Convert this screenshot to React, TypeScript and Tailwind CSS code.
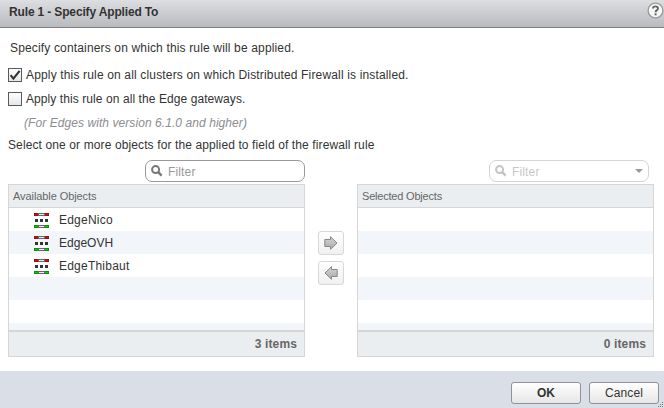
import React from "react";

function EdgeIcon() {
  return (
    <svg width="15" height="15" viewBox="0 0 15 15" shapeRendering="crispEdges" className="mt-[5px] block shrink-0">
      <rect width="15" height="3" fill="#8f1414" />
      <rect x="1" y="1" width="3" height="1" fill="#f00000" />
      <rect x="11" y="1" width="3" height="1" fill="#f00000" />
      <rect x="4" width="7" height="3" fill="#666" />
      <rect x="5" y="1" width="5" height="1" fill="#eee" />
      <rect x="1" y="6" width="3" height="3" fill="#333" />
      <rect x="6" y="6" width="3" height="3" fill="#333" />
      <rect x="11" y="6" width="3" height="3" fill="#333" />
      <rect y="12" width="15" height="3" fill="#0b8f0b" />
      <rect x="1" y="13" width="3" height="1" fill="#00d000" />
      <rect x="11" y="13" width="3" height="1" fill="#00d000" />
      <rect x="4" y="12" width="7" height="3" fill="#666" />
      <rect x="5" y="13" width="5" height="1" fill="#eee" />
    </svg>
  );
}

function Checkbox({ checked = false }: { checked?: boolean }) {
  return (
    <span className="flex h-[14px] w-[14px] shrink-0 items-center justify-center border border-[#555a60] bg-gradient-to-b from-white to-[#e6e6e6]">
      {checked && (
        <svg width="12" height="12" viewBox="0 0 12 12">
          <path d="M1.6 6.2 L4.4 9.6 L10.6 1.8" fill="none" stroke="#333" strokeWidth="2.1" />
        </svg>
      )}
    </span>
  );
}

function Filter({ disabled = false }: { disabled?: boolean }) {
  const tone = disabled
    ? "border-[#d4d4d4] text-[#c8c8c8]"
    : "border-[#999] text-[#999]";
  return (
    <div className={`flex h-[22px] w-[160px] items-center rounded-[7px] border bg-white pl-[5px] pr-[5px] ${tone}`}>
      <svg width="12" height="12" viewBox="0 0 12 12" className="shrink-0">
        <circle cx="4.6" cy="4.6" r="3.5" fill="none" stroke={disabled ? "#c4c4c4" : "#777"} strokeWidth="2" />
        <path d="M7.2 7.2 L10.6 10.6" stroke={disabled ? "#c4c4c4" : "#777"} strokeWidth="2.4" />
      </svg>
      <span className="ml-[5px] flex-1 pt-[2px] text-[12px] leading-[18px] tracking-[0.15px]">Filter</span>
      {disabled && (
        <svg width="8" height="4" viewBox="0 0 8 4">
          <path d="M0 0 H8 L4 4 Z" fill="#999" />
        </svg>
      )}
    </div>
  );
}

type Item = { name: string; tracking: string };

function Panel({ title, tracking, items, disabled }: { title: string; tracking: string; items: Item[]; disabled?: boolean }) {
  const rows = [0, 1, 2, 3, 4, 5];
  return (
    <section className="flex flex-col">
      <div className={`flex justify-end ${disabled ? "pr-[5px]" : ""}`}>
        <Filter disabled={disabled} />
      </div>
      <div className="mt-[2px] flex h-[173px] w-[297px] flex-col border border-[#d6d6d6]">
        <div className={`h-[23px] shrink-0 border-b border-[#d6d6d6] bg-[#eaeef1] pl-1 text-[11px] leading-[23px] text-[#666] ${tracking}`}>
          {title}
        </div>
        <div className="h-[122px] shrink-0 overflow-hidden">
          {rows.map((i) => (
            <div key={i} className="flex h-[23px] items-start gap-[10px] pl-[25px] odd:bg-white even:bg-[#f2f6fb]">
              {items[i] && (
                <>
                  <EdgeIcon />
                  <span className={`leading-[24px] ${items[i].tracking}`}>{items[i].name}</span>
                </>
              )}
            </div>
          ))}
        </div>
        <div className="flex-1 border-t-2 border-[#d6d6d6] bg-[#eaeef1] pr-[7px] text-right text-[12px] font-bold leading-[24px] tracking-[0.13px] text-[#666]">
          {items.length} items
        </div>
      </div>
    </section>
  );
}

function MoveButton({ left = false }: { left?: boolean }) {
  return (
    <button className="flex h-[24px] w-[26px] items-center justify-center rounded-[3px] border border-[#d8d8d8] bg-gradient-to-b from-white to-[#f0f0f0]">
      <svg width="14" height="14" viewBox="0 0 14 14" className={left ? "-scale-x-100" : ""}>
        <defs>
          <linearGradient id={left ? "arrow-l" : "arrow-r"} x1="0" y1="0" x2="0" y2="1">
            <stop offset="0" stopColor="#d5d5d5" />
            <stop offset="1" stopColor="#aaa" />
          </linearGradient>
        </defs>
        <path d="M.8 3.5 H6.5 V.7 L13 7 L6.5 13.3 V10.5 H.8 Z" fill={left ? "url(#arrow-l)" : "url(#arrow-r)"} stroke="#888" />
      </svg>
    </button>
  );
}

function DialogButton({ children, bold = false }: { children: React.ReactNode; bold?: boolean }) {
  return (
    <button className={`h-[22px] w-[70px] rounded-[3px] border border-[#8f9296] bg-gradient-to-b from-white to-[#e6e6e6] text-[12px] leading-[20px] text-[#333] ${bold ? "font-bold" : "tracking-[0.1px]"}`}>
      {children}
    </button>
  );
}

const edges: Item[] = [
  { name: "EdgeNico", tracking: "tracking-[0.22px]" },
  { name: "EdgeOVH", tracking: "tracking-[0.02px]" },
  { name: "EdgeThibaut", tracking: "tracking-[0.22px]" },
];

export default function App() {
  return (
    <main className="flex h-[408px] w-[664px] flex-col overflow-hidden bg-white font-['Liberation_Sans',Arial,sans-serif] text-[12px] text-[#333]">
      <header className="flex h-[28px] shrink-0 justify-between border-b border-[#7f8083] bg-gradient-to-b from-[#dddee2] to-[#b9babe] pl-[9px]">
        <h1 className="text-[12px] font-bold leading-[24px] tracking-[-0.15px]">Rule 1 - Specify Applied To</h1>
        <svg width="17" height="17" viewBox="0 0 17 17" className="mt-[2px]">
          <circle cx="8.5" cy="8.5" r="7.4" fill="#f6f6f6" stroke="#999" strokeWidth="1.3" />
          <path d="M6 6.6 C6 3.6 11 3.7 11 6.4 C11 8.3 8.6 8 8.6 10.2" fill="none" stroke="#666" strokeWidth="1.9" />
          <rect x="7.6" y="11.3" width="2" height="2" fill="#666" />
        </svg>
      </header>
      <div className="flex h-[343px] shrink-0 flex-col pl-[8px]">
        <p className="mt-[12px] pl-[2px] leading-[16px] tracking-[0.155px]">Specify containers on which this rule will be applied.</p>
        <label className="mt-[12px] flex h-[14px] items-center gap-[4px]">
          <Checkbox checked />
          <span className="whitespace-nowrap leading-[14px] tracking-[0.157px]">Apply this rule on all clusters on which Distributed Firewall is installed.</span>
        </label>
        <label className="mt-[10px] flex h-[14px] items-center gap-[4px]">
          <Checkbox />
          <span className="leading-[14px] tracking-[0.08px]">Apply this rule on all the Edge gateways.</span>
        </label>
        <p className="mt-[9px] pl-[16px] italic leading-[16px] tracking-[0.07px] text-[#8a8d91]">(For Edges with version 6.1.0 and higher)</p>
        <p className="mt-[6px] leading-[16px] tracking-[0.115px]">Select one or more objects for the applied to field of the firewall rule</p>
        <div className="mt-[7px] flex">
          <Panel title="Available Objects" tracking="tracking-[-0.08px]" items={edges} />
          <div className="flex w-[52px] flex-col items-center gap-[6px] pt-[71px]">
            <MoveButton />
            <MoveButton left />
          </div>
          <Panel title="Selected Objects" tracking="tracking-[-0.2px]" items={[]} disabled />
        </div>
      </div>
      <footer className="relative flex flex-1 justify-end gap-[8px] bg-[#dadee6] pr-[5px] pt-[11px]">
        <DialogButton bold>OK</DialogButton>
        <DialogButton>Cancel</DialogButton>
        <svg width="6" height="6" viewBox="0 0 6 6" shapeRendering="crispEdges" className="absolute bottom-0 right-0" fill="#777">
          <path d="M4 0h1v1h-1z M2 2h1v1h-1z M4 2h1v1h-1z M0 4h1v1h-1z M2 4h1v1h-1z M4 4h1v1h-1z" />
        </svg>
      </footer>
    </main>
  );
}
